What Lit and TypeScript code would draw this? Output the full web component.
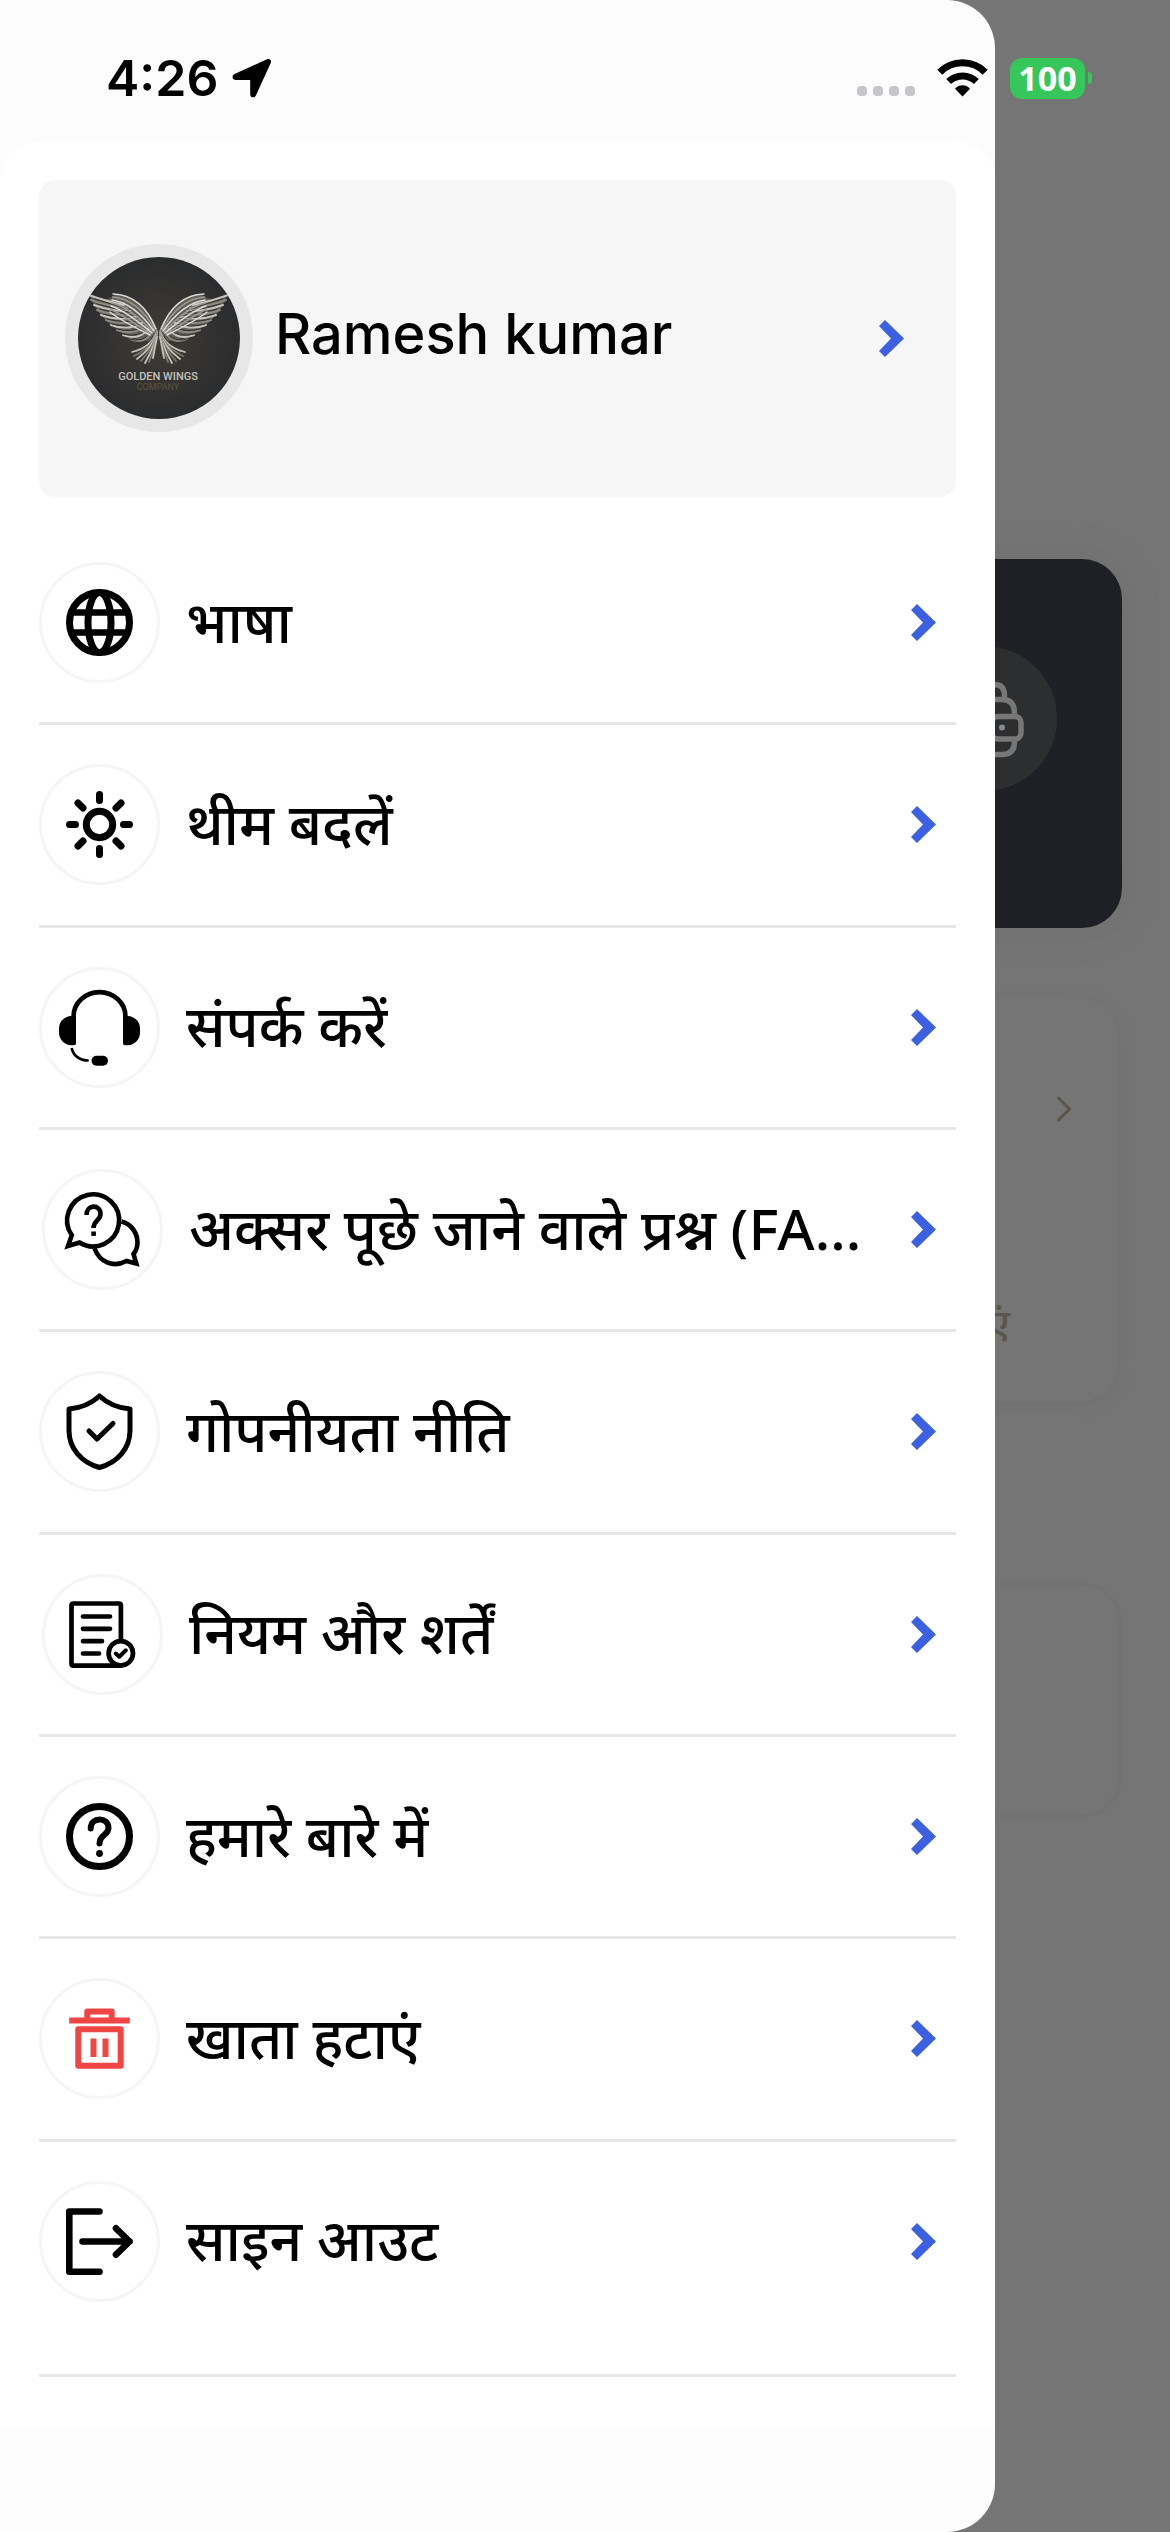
import { LitElement, html, css, svg } from 'lit';
import { customElement, property } from 'lit/decorators.js';

// icons are drawn around 0,0 which is the centre of the round frame
const icons = {
  globe: svg`
    <g fill="none" stroke="#000" stroke-width="7">
      <circle r="30"/>
      <ellipse rx="11.5" ry="30"/>
      <path d="M-28 -10H28M-28 10H28" stroke-width="6.5"/>
    </g>`,
  sun: svg`
    <g fill="none" stroke="#000" stroke-width="7" stroke-linecap="round">
      <circle r="13.2"/>
      <path d="M0 -30V-24M0 24V30M-30 0H-24M24 0H30M-21.5 -21.5L-16.5 -16.5M21.5 -21.5L16.5 -16.5M-21.5 21.5L-16.5 16.5M21.5 21.5L16.5 16.5"/>
    </g>`,
  headset: svg`
    <path d="M-26 -10V-11A26 24.4 0 0 1 26 -11V-10" fill="none" stroke="#000" stroke-width="4.6"/>
    <path d="M-26 -11.7C-35 -11.7 -40.5 -6 -40.5 1V5C-40.5 12 -35 17.7 -28 17.7H-25.5Q-23.5 17.7 -23.5 15.7V-11.7Z"/>
    <path d="M26 -11.7C35 -11.7 40.5 -6 40.5 1V5C40.5 12 35 17.7 28 17.7H25.5Q23.5 17.7 23.5 15.7V-11.7Z"/>
    <path d="M-27.8 20.5C-26.5 27.5 -20.5 33 -10.8 33" fill="none" stroke="#000" stroke-width="2.7"/>
    <rect x="-8" y="28.3" width="16.5" height="10" rx="5"/>`,
  chat: svg`
    <g fill="none" stroke="#000" stroke-width="4.6">
      <path d="M-30.7 5.7L-34.5 16.5L-23 13A26 26 0 1 0 -30.7 5.7Z"/>
      <path d="M19 -8C28 -6 35 3 35 13C35 17 33 22 31 24.5L33.8 34L24 31.5C10 39 -3 32 -8 19"/>
      <path d="M-16 -14.5C-16 -25.5 -2 -25.5 -2 -15.5C-2 -9 -9 -9 -9 -1.5"/>
    </g>
    <rect x="-11.2" y="2" width="4.6" height="4.4"/>`,
  shield: svg`
    <g fill="none" stroke="#000" stroke-width="5" stroke-linecap="round" stroke-linejoin="round">
      <path d="M0 -35.5C-8 -28 -19 -23.5 -30.5 -22.5V-1C-30.5 17 -18 31 0 36C18 31 30.5 17 30.5 -1V-22.5C19 -23.5 8 -28 0 -35.5Z"/>
      <path d="M-10.5 -.5L-2.5 7.5L13.5 -8"/>
    </g>`,
  terms: svg`
    <g fill="none" stroke="#000" stroke-width="4.7" stroke-linecap="round" stroke-linejoin="round">
      <path d="M18.4 5V-29Q18.4 -31 16.4 -31H-29Q-31 -31 -31 -29V29Q-31 31.2 -29 31.2H18"/>
      <path d="M-19.5 -18H7.5M-19.5 -5.7H7.5M-19.5 6.7H-.5M-19.5 19H-3.5"/>
      <circle cx="18.3" cy="18.8" r="12.2"/>
      <path d="M13.3 19L16.8 22.2L23.4 15.8" stroke-width="4"/>
    </g>`,
  help: svg`
    <circle r="30" fill="none" stroke="#000" stroke-width="7"/>
    <path d="M-8.8 -8C-8.8 -20 9 -20 9 -8.5C9 -1 0 -2 0 7" fill="none" stroke="#000" stroke-width="6" stroke-linecap="round"/>
    <circle cy="17" r="3.4"/>`,
  trash: svg`
    <g fill="none" stroke="#f04543" stroke-width="6">
      <path d="M-30.3 -18H30.3"/>
      <path d="M-12.2 -18V-27H12.2V-18" stroke-linejoin="round"/>
      <path d="M-21.2 -9.2H21.2V27.3H-21.2Z" stroke-linejoin="round"/>
      <path d="M-6 0V18.5M6 0V18.5"/>
    </g>`,
  exit: svg`
    <g fill="none" stroke="#000" stroke-width="6.6" stroke-linecap="round" stroke-linejoin="round">
      <path d="M0 -30H-30.2V30.2H0"/>
      <path d="M-17 0H30M16.5 -13.2L30 0L16.5 13.2"/>
    </g>`,
};

type IconName = keyof typeof icons;

interface MenuItem {
  icon: IconName;
  label: string;
  inset?: boolean;
}

const chevron = html`
  <svg class="chevron" viewBox="0 0 25 37" width="25" height="37" aria-hidden="true">
    <path d="M6 0L25 18.5L6 37L0 31L12 18.5L0 6Z" fill="#3b60e0"/>
  </svg>`;

@customElement('menu-row')
export class MenuRow extends LitElement {
  @property() icon: IconName = 'globe';
  @property() label = '';
  @property({ type: Boolean }) inset = false;

  static styles = css`
    :host {
      display: flex;
      min-width: 0;
    }

    .row {
      flex: 1;
      min-width: 0;
      display: flex;
      align-items: center;
      padding: 0 20px 0 0;
      border: 0;
      background: none;
      color: #000;
      font: inherit;
      text-align: left;
      cursor: pointer;
    }

    .icon, .chevron {
      flex: none;
    }

    .label {
      flex: 1;
      min-width: 0;
      margin: 0 20px 0 26px;
      padding-bottom: 4px;
      line-height: 96px;
      white-space: nowrap;
      overflow: hidden;
      text-overflow: ellipsis;
    }
  `;

  render() {
    const pad = this.inset ? 3 : 0;
    return html`
      <button class="row" type="button">
        <svg class="icon" viewBox="${-60.5 - pad} -60.5 ${121 + pad} 121" width=${121 + pad} height="121" aria-hidden="true">
          <circle r="59" fill="#fff" stroke="#f5f5f5" stroke-width="3"/>
          ${icons[this.icon]}
        </svg>
        <span class="label">${this.label}</span>
        ${chevron}
      </button>
    `;
  }
}

@customElement('wings-avatar')
export class WingsAvatar extends LitElement {
  static styles = css`
    :host {
      display: block;
      border: 13px solid #e7e7e7;
      border-radius: 50%;
    }

    .art {
      display: block;
      border-radius: 50%;
    }

    .brand {
      font: 500 11px Roboto, sans-serif;
    }

    .sub {
      font: 400 9px Roboto, sans-serif;
    }
  `;

  wing() {
    const outer = [[11, 38], [13, 43], [16, 48], [19, 53], [23, 58], [28, 63], [33, 68], [39, 73], [45, 78], [52, 82]];
    const upper = [0, 1, 2, 3, 4, 5, 6];
    const tail = [[54, 95], [56, 99], [59, 102], [63, 104], [67, 106], [71, 105], [75, 101]];
    return svg`
      <path d="M12 39C22 44 30 44 37 38C56 38 70 54 79 72L74 84C60 84 26 74 12 39Z" fill="#625e57"/>
      ${outer.map(([x, y], i) => svg`<path d="M${x} ${y}Q${x + 16} ${y + 6} ${46 + i * 3} ${48 + i * 3}" stroke=${i % 2 ? '#8d8a84' : '#c6c4bf'} stroke-width="2"/>`)}
      ${outer.map(([x, y], i) => svg`<path d="M${x + 6} ${y + 4}Q${x + 20} ${y + 8} ${48 + i * 3} ${52 + i * 3}" stroke="#36332f" stroke-width="1"/>`)}
      ${upper.map((i) => svg`<path d="M${35 - i / 2} ${37 + i * 3}Q${64 - i * 4} ${38 + i * 4} ${78 - i} ${72 + i}" stroke=${i % 2 ? '#9c9992' : '#dddbd6'} stroke-width="1.5"/>`)}
      ${tail.map(([x, y], i) => svg`<path d="M79 ${74 + i}Q${74 + i / 2} 90 ${x} ${y}" stroke=${i % 2 ? '#7d786e' : '#c4c1b9'} stroke-width="1.8"/>`)}
    `;
  }

  render() {
    return html`
      <svg class="art" viewBox="0 0 162 162" width="162" height="162" role="img" aria-label="Golden Wings Company">
        <defs>
          <radialGradient id="glow">
            <stop offset="0" stop-color="#403c36"/>
            <stop offset="1" stop-color="#2b2c2e"/>
          </radialGradient>
        </defs>
        <rect width="162" height="162" fill="url(#glow)"/>
        <g fill="none" stroke-linecap="round">
          ${this.wing()}
          <g transform="matrix(-1 0 0 1 161 0)">${this.wing()}</g>
        </g>
        <text class="brand" x="80" y="123" text-anchor="middle" fill="#c4c1bb">GOLDEN WINGS</text>
        <text class="sub" x="80" y="133" text-anchor="middle" fill="#5b5345">COMPANY</text>
      </svg>
    `;
  }
}

@customElement('status-bar')
export class StatusBar extends LitElement {
  static styles = css`
    :host {
      display: flex;
      justify-content: space-between;
      align-items: center;
      box-sizing: border-box;
      height: 156px;
      padding: 0 78px 0 106px;
      font-family: Inter, sans-serif;
    }

    .side {
      display: flex;
      align-items: center;
    }

    .time {
      margin-right: 14px;
      font-size: 50px;
      font-weight: 600;
      line-height: 60px;
    }

    .dots {
      display: flex;
      gap: 6px;
      margin: 26px 22px 0 0;
    }

    .dot {
      width: 10px;
      height: 10px;
      border-radius: 4px;
      background: #c5c6ca;
    }

    .battery {
      margin-left: 22px;
      width: 75px;
      border-radius: 12px;
      background: #35c759;
      color: #fff;
      font-family: "Open Sans", sans-serif;
      font-size: 34px;
      font-weight: 700;
      line-height: 41px;
      text-align: center;
    }

    .tip {
      width: 4px;
      height: 12px;
      margin-left: 3px;
      border-radius: 0 4px 4px 0;
      background: #35c759;
    }
  `;

  render() {
    return html`
      <div class="side">
        <span class="time">4:26</span>
        <svg viewBox="0 0 40 40" width="40" height="40" aria-hidden="true">
          <path d="M35 1.3L2.5 16C-.5 17.6 0 21.8 3.5 22H17.4C18 22 18.2 22.3 18.2 23V36.5C18.4 40 22.8 40.3 24 37.3L38.7 5C39.8 2.3 37.8 0 35 1.3Z"/>
        </svg>
      </div>
      <div class="side">
        <div class="dots">
          <i class="dot"></i><i class="dot"></i><i class="dot"></i><i class="dot"></i>
        </div>
        <svg viewBox="0 0 51 38" width="51" height="38" aria-hidden="true">
          <path d="M2.8 13.2A32 32 0 0 1 48.2 13.2" fill="none" stroke="#000" stroke-width="7.2"/>
          <path d="M11.6 22.6A20 20 0 0 1 39.4 22.6" fill="none" stroke="#000" stroke-width="7"/>
          <path d="M25.5 37.5L18 29.8C22 25.2 29 25.2 33 29.8Z"/>
        </svg>
        <span class="battery">100</span>
        <i class="tip"></i>
      </div>
    `;
  }
}

@customElement('app-root')
export class AppRoot extends LitElement {
  items: MenuItem[] = [
    { icon: 'globe', label: 'भाषा' },
    { icon: 'sun', label: 'थीम बदलें' },
    { icon: 'headset', label: 'संपर्क करें' },
    { icon: 'chat', label: 'अक्सर पूछे जाने वाले प्रश्न (FA...', inset: true },
    { icon: 'shield', label: 'गोपनीयता नीति' },
    { icon: 'terms', label: 'नियम और शर्तें', inset: true },
    { icon: 'help', label: 'हमारे बारे में' },
    { icon: 'trash', label: 'खाता हटाएं' },
    { icon: 'exit', label: 'साइन आउट' },
  ];

  static styles = css`
    :host {
      display: grid;
      min-height: 100vh;
      background: #757575;
      font-family: "Noto Sans", sans-serif;
      font-size: 57px;
      font-weight: 500;
    }

    /* the dimmed home screen and the drawer share one grid cell */
    .home, .drawer, .status {
      grid-area: 1 / 1;
      min-width: 0;
    }

    .home {
      padding: 559px 48px 0;
    }

    .card {
      box-sizing: border-box;
      border-radius: 40px;
    }

    .banner {
      display: flex;
      align-items: flex-start;
      justify-content: flex-end;
      height: 369px;
      padding: 87px 65px 0;
      background: #1f2025;
      box-shadow: 0 0 30px #6f6f6f;
    }

    .balance {
      display: flex;
      flex-direction: column;
      justify-content: space-between;
      align-items: flex-end;
      height: 404px;
      margin: 70px 4px 0 0;
      padding: 98px 46px 52px;
      background: #757575;
      box-shadow: 0 2px 14px #707070;
      color: #5b554c;
      font-size: 40px;
      line-height: 54px;
    }

    .hint {
      margin-right: 62px;
    }

    .plain {
      height: 236px;
      margin-top: 180px;
      border: 4px solid #727272;
    }

    .drawer {
      width: 85%;
      box-sizing: border-box;
      display: flex;
      flex-direction: column;
      padding: 141px 0 102px;
      border-radius: 0 48px 48px 0;
      background: #fcfcfc;
    }

    .panel {
      flex: 1;
      display: flex;
      flex-direction: column;
      padding: 39px 39px 53px;
      border-radius: 40px 40px 0 0;
      background: #fff;
    }

    .profile {
      display: flex;
      align-items: center;
      padding: 64px 52px 65px 26px;
      border: 0;
      border-radius: 16px;
      background: #f6f6f6;
      color: #000;
      font: 500 56px/78px Inter, sans-serif;
      text-align: left;
      cursor: pointer;
    }

    .name {
      flex: 1;
      margin-left: 22px;
      padding-bottom: 8px;
    }

    .menu {
      flex: 1;
      display: flex;
      flex-direction: column;
      margin: 26px 0 0;
      padding: 0 0 30px;
      border-bottom: 3px solid #e7e7e7;
      list-style: none;
    }

    .item {
      flex: 1;
      display: grid;
      min-height: 160px;
      border-bottom: 3px solid #e7e7e7;
    }

    .item:last-child {
      border-color: transparent;
    }

    .status {
      align-self: start;
    }
  `;

  render() {
    return html`
      <main class="home">
        <div class="card banner">
          <svg viewBox="0 0 145 145" width="145" height="145" aria-hidden="true">
            <circle cx="72.5" cy="72.5" r="72.5" fill="#2d2e2f"/>
            <g fill="none" stroke="#777" stroke-width="5.4">
              <path d="M50 53V48Q50 38.5 60 38.5H82Q92.5 38.5 92.5 49V53"/>
              <path d="M102.5 70V67Q102.5 53.5 90 53.5H52Q41 53.5 41 65V98Q41 108.5 52 108.5H90Q102.5 108.5 102.5 96V92"/>
              <rect x="80" y="70.5" width="29" height="22.5" rx="6"/>
            </g>
            <circle cx="90" cy="81.5" r="3" fill="#8a8a8a"/>
          </svg>
        </div>
        <div class="card balance">
          <svg viewBox="0 0 16 26" width="16" height="26" aria-hidden="true">
            <path d="M2.5 2L13.5 13L2.5 24" fill="none" stroke="#5b554c" stroke-width="3" stroke-linecap="round"/>
          </svg>
          <span class="hint">सुविधाएं</span>
        </div>
        <div class="card plain"></div>
      </main>

      <nav class="drawer">
        <div class="panel">
          <button class="profile" type="button">
            <wings-avatar></wings-avatar>
            <span class="name">Ramesh kumar</span>
            ${chevron}
          </button>
          <ul class="menu">
            ${this.items.map((item) => html`
              <li class="item">
                <menu-row icon=${item.icon} label=${item.label} ?inset=${item.inset}></menu-row>
              </li>`)}
          </ul>
        </div>
      </nav>

      <status-bar class="status"></status-bar>
    `;
  }
}
